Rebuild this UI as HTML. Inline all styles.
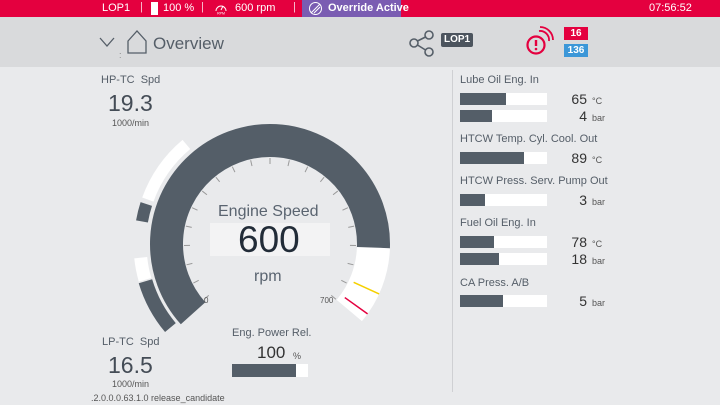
<!DOCTYPE html>
<html><head><meta charset="utf-8"><style>
*{margin:0;padding:0;box-sizing:border-box}
html,body{width:720px;height:405px;overflow:hidden}
body{background:#e9eaec;font-family:"Liberation Sans",sans-serif;position:relative;color:#4a5360}
.a{position:absolute;white-space:nowrap;line-height:1.15}
.top{position:absolute;left:0;top:0;width:720px;height:17px;background:#e4003f;color:#fff;font-size:11px}
.hdr{position:absolute;left:0;top:17px;width:720px;height:50px;background:#d9dadc}
.bar{position:absolute;height:12px;background:#fff}
.bar i{position:absolute;left:0;top:0;bottom:0;background:#545e68}
.lbl{font-size:11px;color:#555e68}
.val{font-size:14px;color:#333;text-align:right;width:60px}
.u{font-size:9px;color:#555}
</style></head><body>
<div class="top">
<span class="a" style="left:102px;top:2px">LOP1</span>
<span class="a" style="left:140px;top:1px;opacity:.8">|</span>
<span class="a" style="left:151px;top:2px;width:7px;height:13px;background:#fff"></span>
<span class="a" style="left:163px;top:2px">100 %</span>
<span class="a" style="left:201px;top:1px;opacity:.8">|</span>
<svg class="a" style="left:214px;top:2px" width="14" height="13" viewBox="0 0 14 13"><path d="M2 9A5 5 0 1 1 12 9" fill="none" stroke="#fff" stroke-width="1"/><path d="M7 8L9 4" stroke="#fff"/><text x="7" y="12.5" font-size="3.5" fill="#fff" text-anchor="middle">RPM</text></svg>
<span class="a" style="left:235px;top:2px">600 rpm</span>
<span class="a" style="left:293px;top:1px;opacity:.8">|</span>
<div class="a" style="left:302px;top:0;width:99px;height:17px;background:#7a5cb2"></div>
<svg class="a" style="left:308px;top:1px" width="15" height="15" viewBox="0 0 15 15"><circle cx="7.5" cy="7.5" r="6" fill="none" stroke="#fff" stroke-width="1"/><path d="M3 12L12 3M5 10L10 5M6 12L12 6" stroke="#fff" stroke-width="1"/></svg>
<span class="a" style="left:328px;top:2px;font-weight:bold">Override Active</span>
<span class="a" style="left:649px;top:2px">07:56:52</span>
</div>
<div class="hdr">
<svg class="a" style="left:98px;top:18px" width="20" height="14"><path d="M2 3L9 11L16 3" fill="none" stroke="#555e68" stroke-width="1.3"/></svg>
<span class="a" style="left:119px;top:33px;font-size:9px;color:#888">:</span>
<svg class="a" style="left:126px;top:12px" width="22" height="26"><path d="M2 12L11 2L20 12V24H2Z" fill="none" stroke="#555e68" stroke-width="1.3"/></svg>
<span class="a" style="left:153px;top:17px;font-size:17px;color:#555e68">Overview</span>
<svg class="a" style="left:408px;top:12px" width="30" height="30"><circle cx="21" cy="6" r="4" fill="none" stroke="#555e68" stroke-width="1.6"/><circle cx="6" cy="14" r="4" fill="none" stroke="#555e68" stroke-width="1.6"/><circle cx="21" cy="23" r="4" fill="none" stroke="#555e68" stroke-width="1.6"/><path d="M9.5 12L17.5 8M9.5 16L17.5 21" stroke="#555e68" stroke-width="1.6"/></svg>
<span class="a" style="left:441px;top:16px;background:#4c545e;color:#fff;font-size:10px;font-weight:bold;padding:1px 3px;border-radius:2px">LOP1</span>
<svg class="a" style="left:524px;top:9px" width="30" height="30"><circle cx="12" cy="19" r="8.5" fill="none" stroke="#e4003f" stroke-width="2.2"/><path d="M12 14V20" stroke="#e4003f" stroke-width="2.4"/><circle cx="12" cy="23" r="1.3" fill="#e4003f"/><path d="M15 5A9 9 0 0 1 25 15M16 1A13 13 0 0 1 29 14" fill="none" stroke="#e4003f" stroke-width="1.8"/></svg>
<span class="a" style="left:564px;top:10px;width:24px;height:13px;background:#e4003f;color:#fff;font-size:10px;font-weight:bold;text-align:center;line-height:13px">16</span>
<span class="a" style="left:564px;top:27px;width:24px;height:13px;background:#3c97d8;color:#fff;font-size:10px;font-weight:bold;text-align:center;line-height:13px">136</span>
</div>

<span class="a" style="left:101px;top:74px;font-size:11px;color:#555e68">HP-TC&nbsp; Spd</span>
<span class="a" style="left:108px;top:90px;font-size:23px;color:#444c56">19.3</span>
<span class="a" style="left:112px;top:118px;font-size:9px;color:#555">1000/min</span>

<svg class="a" style="left:0;top:0" width="452" height="405">
<g transform="rotate(-222 270 244)">
<circle cx="270" cy="244" r="103.5" fill="none" stroke="#545e68" stroke-width="33" stroke-dasharray="405 1000"/>
</g>
<g transform="rotate(2 270 244)">
<circle cx="270" cy="244" r="103.5" fill="none" stroke="#fff" stroke-width="33" stroke-dasharray="68.6 1000"/>
</g>
<g transform="rotate(-160 270 244)"><circle cx="270" cy="244" r="130" fill="none" stroke="#fff" stroke-width="12" stroke-dasharray="68 1000"/></g>
<g transform="rotate(-170 270 244)"><circle cx="270" cy="244" r="130" fill="none" stroke="#545e68" stroke-width="12" stroke-dasharray="18 1000"/></g>
<g transform="rotate(-196 270 244)"><circle cx="270" cy="244" r="130" fill="none" stroke="#fff" stroke-width="13" stroke-dasharray="22.6 1000"/></g>
<g transform="rotate(-220 270 244)"><circle cx="270" cy="244" r="130" fill="none" stroke="#545e68" stroke-width="14" stroke-dasharray="53 1000"/></g>
<g stroke="#999" stroke-width="1">
<line x1="270" y1="158" x2="270" y2="164" transform="rotate(-130 270 244)"/>
<line x1="270" y1="158" x2="270" y2="164" transform="rotate(-117 270 244)"/>
<line x1="270" y1="158" x2="270" y2="164" transform="rotate(-104 270 244)"/>
<line x1="270" y1="158" x2="270" y2="164" transform="rotate(-91 270 244)"/>
<line x1="270" y1="158" x2="270" y2="164" transform="rotate(-78 270 244)"/>
<line x1="270" y1="158" x2="270" y2="164" transform="rotate(-65 270 244)"/>
<line x1="270" y1="158" x2="270" y2="164" transform="rotate(-52 270 244)"/>
<line x1="270" y1="158" x2="270" y2="164" transform="rotate(-39 270 244)"/>
<line x1="270" y1="158" x2="270" y2="164" transform="rotate(-26 270 244)"/>
<line x1="270" y1="158" x2="270" y2="164" transform="rotate(-13 270 244)"/>
<line x1="270" y1="158" x2="270" y2="164"/>
<line x1="270" y1="158" x2="270" y2="164" transform="rotate(13 270 244)"/>
<line x1="270" y1="158" x2="270" y2="164" transform="rotate(26 270 244)"/>
<line x1="270" y1="158" x2="270" y2="164" transform="rotate(39 270 244)"/>
<line x1="270" y1="158" x2="270" y2="164" transform="rotate(52 270 244)"/>
<line x1="270" y1="158" x2="270" y2="164" transform="rotate(65 270 244)"/>
<line x1="270" y1="158" x2="270" y2="164" transform="rotate(78 270 244)"/>
<line x1="270" y1="158" x2="270" y2="164" transform="rotate(91 270 244)"/>
<line x1="270" y1="158" x2="270" y2="164" transform="rotate(104 270 244)"/>
<line x1="270" y1="158" x2="270" y2="164" transform="rotate(117 270 244)"/>
<line x1="270" y1="158" x2="270" y2="164" transform="rotate(130 270 244)"/>
</g>
<line x1="270" y1="124" x2="270" y2="152" stroke="#f5d000" stroke-width="1.5" transform="rotate(114.6 270 244)"/>
<line x1="270" y1="124" x2="270" y2="152" stroke="#e4003f" stroke-width="1.5" transform="rotate(125.6 270 244)"/>
</svg>
<div class="a" style="left:210px;top:223px;width:120px;height:33px;background:#f3f3f4"></div>
<span class="a" style="left:218px;top:203px;font-size:16px;color:#5a6470">Engine Speed</span>
<span class="a" style="left:238px;top:219px;font-size:37px;color:#222c38">600</span>
<span class="a" style="left:254px;top:268px;font-size:16px;color:#5a6470">rpm</span>
<span class="a" style="left:204px;top:296px;font-size:8px;color:#555">0</span>
<span class="a" style="left:320px;top:296px;font-size:8px;color:#555">700</span>

<span class="a" style="left:232px;top:327px;font-size:11px;color:#555e68">Eng. Power Rel.</span>
<span class="a" style="left:257px;top:343px;font-size:17px;color:#333">100</span>
<span class="a" style="left:293px;top:351px;font-size:9px;color:#555">%</span>
<div class="bar" style="left:232px;top:364px;width:76px;height:13px"><i style="width:64px"></i></div>

<span class="a" style="left:102px;top:336px;font-size:11px;color:#555e68">LP-TC&nbsp; Spd</span>
<span class="a" style="left:108px;top:352px;font-size:23px;color:#444c56">16.5</span>
<span class="a" style="left:112px;top:379px;font-size:9px;color:#555">1000/min</span>
<span class="a" style="left:91px;top:394px;font-size:9px;line-height:1;color:#555">.2.0.0.0.63.1.0 release_candidate</span>

<div class="a" style="left:452px;top:70px;width:1px;height:322px;background:#cfd0d3"></div>
<span class="a lbl" style="left:460px;top:74px">Lube Oil Eng. In</span>
<div class="bar" style="left:460px;top:93px;width:87px"><i style="width:46px"></i></div>
<span class="a val" style="left:527px;top:91px">65</span><span class="a u" style="left:592px;top:96px">°C</span>
<div class="bar" style="left:460px;top:110px;width:87px"><i style="width:32px"></i></div>
<span class="a val" style="left:527px;top:108px">4</span><span class="a u" style="left:592px;top:113px">bar</span>

<span class="a lbl" style="left:460px;top:133px">HTCW Temp. Cyl. Cool. Out</span>
<div class="bar" style="left:460px;top:152px;width:87px"><i style="width:64px"></i></div>
<span class="a val" style="left:527px;top:150px">89</span><span class="a u" style="left:592px;top:155px">°C</span>

<span class="a lbl" style="left:460px;top:175px">HTCW Press. Serv. Pump Out</span>
<div class="bar" style="left:460px;top:194px;width:87px"><i style="width:25px"></i></div>
<span class="a val" style="left:527px;top:192px">3</span><span class="a u" style="left:592px;top:197px">bar</span>

<span class="a lbl" style="left:460px;top:217px">Fuel Oil Eng. In</span>
<div class="bar" style="left:460px;top:236px;width:87px"><i style="width:34px"></i></div>
<span class="a val" style="left:527px;top:234px">78</span><span class="a u" style="left:592px;top:239px">°C</span>
<div class="bar" style="left:460px;top:253px;width:87px"><i style="width:39px"></i></div>
<span class="a val" style="left:527px;top:251px">18</span><span class="a u" style="left:592px;top:256px">bar</span>

<span class="a lbl" style="left:460px;top:277px">CA Press. A/B</span>
<div class="bar" style="left:460px;top:295px;width:87px"><i style="width:43px"></i></div>
<span class="a val" style="left:527px;top:293px">5</span><span class="a u" style="left:592px;top:298px">bar</span>
</body></html>
